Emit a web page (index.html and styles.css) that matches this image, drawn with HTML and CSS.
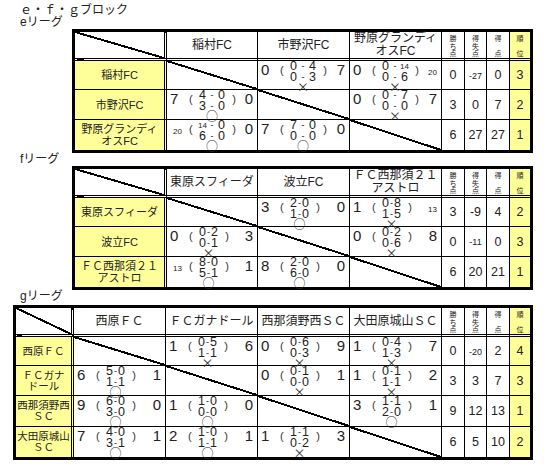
FILE: index.html
```html
<!DOCTYPE html>
<html lang="ja">
<head>
<meta charset="utf-8">
<title>e・f・gブロック</title>
<link rel="stylesheet" href="styles.css">
</head>
<body>
<div class="page">
<p class="title">ｅ・ｆ・ｇブロック</p>
<p class="league">eリーグ</p>
<table class="tbl tbl-e">
<colgroup><col class="w92"><col class="w91"><col class="w92"><col class="w92"><col class="w23"><col class="w22"><col class="w23"><col class="w20"></colgroup>
<tr class="hd">
<th class="dbl dg"></th><th>稲村FC</th><th>市野沢FC</th><th>野原グランディ<br>オスFC</th>
<th class="sh"><div class="v"><span>勝</span><span>ち</span><span>点</span></div></th>
<th class="sh"><div class="v"><span>得</span><span>失</span><span>点</span></div></th>
<th class="sh"><div class="v"><span>得</span><span>点</span></div></th>
<th class="sh rk"><div class="v"><span>順</span><span>位</span></div></th>
</tr>
<tr class="h29">
<td class="dbl nm">稲村FC</td>
<td class="dg"></td>
<td class="s"><div class="sc"><span class="l">0</span><span class="p p1">(</span><span class="stk"><span class="ln"><span class="n">0</span><span class="d">-</span><span class="n">4</span></span><span class="ln"><span class="n">0</span><span class="d">-</span><span class="n">3</span></span><span class="mk">×</span></span><span class="p p2">)</span><span class="r">7</span></div></td>
<td class="s"><div class="sc"><span class="l">0</span><span class="p p1">(</span><span class="stk"><span class="ln"><span class="n">0</span><span class="d">-</span><span class="n"><span class="sm t">14</span></span></span><span class="ln"><span class="n">0</span><span class="d">-</span><span class="n">6</span></span><span class="mk">×</span></span><span class="p p2">)</span><span class="r"><span class="sm">20</span></span></div></td>
<td class="st">0</td><td class="st"><span class="s3">-27</span></td><td class="st">0</td><td class="st rk">3</td>
</tr>
<tr class="h30">
<td class="dbl nm">市野沢FC</td>
<td class="s"><div class="sc"><span class="l">7</span><span class="p p1">(</span><span class="stk"><span class="ln"><span class="n">4</span><span class="d">-</span><span class="n">0</span></span><span class="ln"><span class="n">3</span><span class="d">-</span><span class="n">0</span></span><span class="mk">○</span></span><span class="p p2">)</span><span class="r">0</span></div></td>
<td class="dg"></td>
<td class="s"><div class="sc"><span class="l">0</span><span class="p p1">(</span><span class="stk"><span class="ln"><span class="n">0</span><span class="d">-</span><span class="n">7</span></span><span class="ln"><span class="n">0</span><span class="d">-</span><span class="n">0</span></span><span class="mk">×</span></span><span class="p p2">)</span><span class="r">7</span></div></td>
<td class="st">3</td><td class="st">0</td><td class="st">7</td><td class="st rk">2</td>
</tr>
<tr class="h30">
<td class="dbl nm">野原グランディ<br>オスFC</td>
<td class="s"><div class="sc"><span class="l"><span class="sm">20</span></span><span class="p p1">(</span><span class="stk"><span class="ln"><span class="n"><span class="sm t">14</span></span><span class="d">-</span><span class="n">0</span></span><span class="ln"><span class="n">6</span><span class="d">-</span><span class="n">0</span></span><span class="mk">○</span></span><span class="p p2">)</span><span class="r">0</span></div></td>
<td class="s"><div class="sc"><span class="l">7</span><span class="p p1">(</span><span class="stk"><span class="ln"><span class="n">7</span><span class="d">-</span><span class="n">0</span></span><span class="ln"><span class="n">0</span><span class="d">-</span><span class="n">0</span></span><span class="mk">○</span></span><span class="p p2">)</span><span class="r">0</span></div></td>
<td class="dg"></td>
<td class="st">6</td><td class="st">27</td><td class="st">27</td><td class="st rk">1</td>
</tr>
</table>

<p class="league">fリーグ</p>
<table class="tbl tbl-f">
<colgroup><col class="w92"><col class="w91"><col class="w92"><col class="w92"><col class="w23"><col class="w22"><col class="w23"><col class="w20"></colgroup>
<tr class="hd">
<th class="dbl dg"></th><th>東原スフィーダ</th><th>波立FC</th><th>ＦＣ西那須２１<br>アストロ</th>
<th class="sh"><div class="v"><span>勝</span><span>ち</span><span>点</span></div></th>
<th class="sh"><div class="v"><span>得</span><span>失</span><span>点</span></div></th>
<th class="sh"><div class="v"><span>得</span><span>点</span></div></th>
<th class="sh rk"><div class="v"><span>順</span><span>位</span></div></th>
</tr>
<tr class="h29">
<td class="dbl nm">東原スフィーダ</td>
<td class="dg"></td>
<td class="s"><div class="sc"><span class="l">3</span><span class="p p1">(</span><span class="stk"><span class="ln"><span class="n">2</span><span class="d">-</span><span class="n">0</span></span><span class="ln"><span class="n">1</span><span class="d">-</span><span class="n">0</span></span><span class="mk">○</span></span><span class="p p2">)</span><span class="r">0</span></div></td>
<td class="s"><div class="sc"><span class="l">1</span><span class="p p1">(</span><span class="stk"><span class="ln"><span class="n">0</span><span class="d">-</span><span class="n">8</span></span><span class="ln"><span class="n">1</span><span class="d">-</span><span class="n">5</span></span><span class="mk">×</span></span><span class="p p2">)</span><span class="r"><span class="sm">13</span></span></div></td>
<td class="st">3</td><td class="st">-9</td><td class="st">4</td><td class="st rk">2</td>
</tr>
<tr class="h30">
<td class="dbl nm">波立FC</td>
<td class="s"><div class="sc"><span class="l">0</span><span class="p p1">(</span><span class="stk"><span class="ln"><span class="n">0</span><span class="d">-</span><span class="n">2</span></span><span class="ln"><span class="n">0</span><span class="d">-</span><span class="n">1</span></span><span class="mk">×</span></span><span class="p p2">)</span><span class="r">3</span></div></td>
<td class="dg"></td>
<td class="s"><div class="sc"><span class="l">0</span><span class="p p1">(</span><span class="stk"><span class="ln"><span class="n">0</span><span class="d">-</span><span class="n">2</span></span><span class="ln"><span class="n">0</span><span class="d">-</span><span class="n">6</span></span><span class="mk">×</span></span><span class="p p2">)</span><span class="r">8</span></div></td>
<td class="st">0</td><td class="st"><span class="s3">-11</span></td><td class="st">0</td><td class="st rk">3</td>
</tr>
<tr class="h30">
<td class="dbl nm">ＦＣ西那須２１<br>アストロ</td>
<td class="s"><div class="sc"><span class="l"><span class="sm">13</span></span><span class="p p1">(</span><span class="stk"><span class="ln"><span class="n">8</span><span class="d">-</span><span class="n">0</span></span><span class="ln"><span class="n">5</span><span class="d">-</span><span class="n">1</span></span><span class="mk">○</span></span><span class="p p2">)</span><span class="r">1</span></div></td>
<td class="s"><div class="sc"><span class="l">8</span><span class="p p1">(</span><span class="stk"><span class="ln"><span class="n">2</span><span class="d">-</span><span class="n">0</span></span><span class="ln"><span class="n">6</span><span class="d">-</span><span class="n">0</span></span><span class="mk">○</span></span><span class="p p2">)</span><span class="r">0</span></div></td>
<td class="dg"></td>
<td class="st">6</td><td class="st">20</td><td class="st">21</td><td class="st rk">1</td>
</tr>
</table>

<p class="league league-g">gリーグ</p>
<table class="tbl tbl-g">
<colgroup><col class="w58"><col class="w92"><col class="w92"><col class="w92"><col class="w92"><col class="w23"><col class="w22"><col class="w23"><col class="w20"></colgroup>
<tr class="hd hg">
<th class="dbl dg"></th><th>西原ＦＣ</th><th>ＦＣガナドール</th><th>西那須野西ＳＣ</th><th>大田原城山ＳＣ</th>
<th class="sh"><div class="v"><span>勝</span><span>ち</span><span>点</span></div></th>
<th class="sh"><div class="v"><span>得</span><span>失</span><span>点</span></div></th>
<th class="sh"><div class="v"><span>得</span><span>点</span></div></th>
<th class="sh rk"><div class="v"><span>順</span><span>位</span></div></th>
</tr>
<tr class="h29">
<td class="dbl nm">西原ＦＣ</td>
<td class="dg"></td>
<td class="s"><div class="sc"><span class="l">1</span><span class="p p1">(</span><span class="stk"><span class="ln"><span class="n">0</span><span class="d">-</span><span class="n">5</span></span><span class="ln"><span class="n">1</span><span class="d">-</span><span class="n">1</span></span><span class="mk">×</span></span><span class="p p2">)</span><span class="r">6</span></div></td>
<td class="s"><div class="sc"><span class="l">0</span><span class="p p1">(</span><span class="stk"><span class="ln"><span class="n">0</span><span class="d">-</span><span class="n">6</span></span><span class="ln"><span class="n">0</span><span class="d">-</span><span class="n">3</span></span><span class="mk">×</span></span><span class="p p2">)</span><span class="r">9</span></div></td>
<td class="s"><div class="sc"><span class="l">1</span><span class="p p1">(</span><span class="stk"><span class="ln"><span class="n">0</span><span class="d">-</span><span class="n">4</span></span><span class="ln"><span class="n">1</span><span class="d">-</span><span class="n">3</span></span><span class="mk">×</span></span><span class="p p2">)</span><span class="r">7</span></div></td>
<td class="st">0</td><td class="st"><span class="s3">-20</span></td><td class="st">2</td><td class="st rk">4</td>
</tr>
<tr class="h30">
<td class="dbl nm">ＦＣガナ<br>ドール</td>
<td class="s"><div class="sc"><span class="l">6</span><span class="p p1">(</span><span class="stk"><span class="ln"><span class="n">5</span><span class="d">-</span><span class="n">0</span></span><span class="ln"><span class="n">1</span><span class="d">-</span><span class="n">1</span></span><span class="mk">○</span></span><span class="p p2">)</span><span class="r">1</span></div></td>
<td class="dg"></td>
<td class="s"><div class="sc"><span class="l">0</span><span class="p p1">(</span><span class="stk"><span class="ln"><span class="n">0</span><span class="d">-</span><span class="n">1</span></span><span class="ln"><span class="n">0</span><span class="d">-</span><span class="n">0</span></span><span class="mk">×</span></span><span class="p p2">)</span><span class="r">1</span></div></td>
<td class="s"><div class="sc"><span class="l">1</span><span class="p p1">(</span><span class="stk"><span class="ln"><span class="n">0</span><span class="d">-</span><span class="n">1</span></span><span class="ln"><span class="n">1</span><span class="d">-</span><span class="n">1</span></span><span class="mk">×</span></span><span class="p p2">)</span><span class="r">2</span></div></td>
<td class="st">3</td><td class="st">3</td><td class="st">7</td><td class="st rk">3</td>
</tr>
<tr class="h31">
<td class="dbl nm">西那須野西<br>ＳＣ</td>
<td class="s"><div class="sc"><span class="l">9</span><span class="p p1">(</span><span class="stk"><span class="ln"><span class="n">6</span><span class="d">-</span><span class="n">0</span></span><span class="ln"><span class="n">3</span><span class="d">-</span><span class="n">0</span></span><span class="mk">○</span></span><span class="p p2">)</span><span class="r">0</span></div></td>
<td class="s"><div class="sc"><span class="l">1</span><span class="p p1">(</span><span class="stk"><span class="ln"><span class="n">1</span><span class="d">-</span><span class="n">0</span></span><span class="ln"><span class="n">0</span><span class="d">-</span><span class="n">0</span></span><span class="mk">○</span></span><span class="p p2">)</span><span class="r">0</span></div></td>
<td class="dg"></td>
<td class="s"><div class="sc"><span class="l">3</span><span class="p p1">(</span><span class="stk"><span class="ln"><span class="n">1</span><span class="d">-</span><span class="n">1</span></span><span class="ln"><span class="n">2</span><span class="d">-</span><span class="n">0</span></span><span class="mk">○</span></span><span class="p p2">)</span><span class="r">1</span></div></td>
<td class="st">9</td><td class="st">12</td><td class="st">13</td><td class="st rk">1</td>
</tr>
<tr class="h30">
<td class="dbl nm">大田原城山<br>ＳＣ</td>
<td class="s"><div class="sc"><span class="l">7</span><span class="p p1">(</span><span class="stk"><span class="ln"><span class="n">4</span><span class="d">-</span><span class="n">0</span></span><span class="ln"><span class="n">3</span><span class="d">-</span><span class="n">1</span></span><span class="mk">○</span></span><span class="p p2">)</span><span class="r">1</span></div></td>
<td class="s"><div class="sc"><span class="l">2</span><span class="p p1">(</span><span class="stk"><span class="ln"><span class="n">1</span><span class="d">-</span><span class="n">0</span></span><span class="ln"><span class="n">1</span><span class="d">-</span><span class="n">1</span></span><span class="mk">○</span></span><span class="p p2">)</span><span class="r">1</span></div></td>
<td class="s"><div class="sc"><span class="l">1</span><span class="p p1">(</span><span class="stk"><span class="ln"><span class="n">1</span><span class="d">-</span><span class="n">1</span></span><span class="ln"><span class="n">0</span><span class="d">-</span><span class="n">2</span></span><span class="mk">×</span></span><span class="p p2">)</span><span class="r">3</span></div></td>
<td class="dg"></td>
<td class="st">6</td><td class="st">5</td><td class="st">10</td><td class="st rk">2</td>
</tr>
</table>
</div>
</body>
</html>
```

FILE: styles.css
```css
* { box-sizing: border-box; }
html, body { margin: 0; padding: 0; background: #fff; }
body {
  color: #222;
  font-family: "Liberation Sans", "Noto Sans CJK JP", sans-serif;
  width: 546px;
  height: 469px;
  overflow: hidden;
}
.page { padding-top: 2px; }
.title {
  margin: 0 0 0 20px;
  font-family: "Noto Sans CJK JP", sans-serif;
  font-size: 12px;
  line-height: 14px;
}
.league {
  margin: 0 0 0 20px;
  font-family: "Liberation Sans", "Noto Sans CJK JP", sans-serif;
  font-size: 12px;
  line-height: 13px;
}
.league-g { margin-bottom: 2px; }

.tbl {
  border-collapse: separate;
  border-spacing: 0;
  table-layout: fixed;
  border: 3px solid #000;
}
.tbl-e, .tbl-f { margin-left: 72px; width: 461px; }
.tbl-g { margin-left: 13px; width: 520px; }

.w92 { width: 92px; }
.w91 { width: 91px; }
.w58 { width: 58px; }
.w23 { width: 23px; }
.w22 { width: 22px; }
.w20 { width: 20px; }

.tbl th, .tbl td {
  padding: 0;
  border-right: 1px solid #000;
  border-bottom: 1px solid #000;
  font-weight: normal;
}
.tbl tr > :last-child { border-right: 0; }
.tbl tr:last-child > * { border-bottom: 0; }
.tbl .dbl { border-right: 3px double #000; }
.tbl .hd > * { border-bottom: 3px double #000; }

.hd { height: 28px; }
.hg { height: 29px; }
.h29 { height: 29px; }
.h30 { height: 30px; }
.h31 { height: 31px; }

.tbl th {
  font-size: 12px;
  line-height: 13px;
  text-align: center;
  vertical-align: middle;
  white-space: nowrap;
}

.dg {
  background: linear-gradient(to top right,
    transparent calc(50% - 1px), #000 calc(50% - 1px),
    #000 calc(50% + 1px), transparent calc(50% + 1px));
}

.nm {
  background: #ffff99;
  text-align: center;
  vertical-align: middle;
  font-size: 11px;
  line-height: 12px;
  white-space: nowrap;
}
.tbl-g .nm { font-size: 10.5px; line-height: 11px; }

.rk { background: #ffff99; }

.sh { vertical-align: top; }
.sh .v {
  display: flex;
  flex-direction: column;
  justify-content: space-between;
  align-items: center;
  height: 22px;
  margin-top: 2px;
  font-family: "Noto Sans CJK JP", sans-serif;
  font-size: 7px;
  line-height: 7px;
}

.st {
  text-align: center;
  vertical-align: middle;
  font-size: 12.5px;
  line-height: 14px;
}
.s3 { font-size: 9px; }

.s { vertical-align: top; }
.sc {
  display: grid;
  grid-template-columns: 22px 10px auto 11px 1fr;
  align-items: start;
  height: 27px;
}
.l, .r {
  font-size: 15px;
  line-height: 15px;
  padding-top: 1px;
  white-space: nowrap;
}
.l { padding-left: 3px; }
.l .sm { margin-left: 3px; }
.r { justify-self: end; padding-right: 4px; }
.sm { font-size: 8px; }
.sm.t { vertical-align: 2px; }

.p {
  font-size: 11px;
  line-height: 18px;
  color: #333;
}
.p1 { text-align: left; }
.p2 { text-align: right; }

.stk {
  display: flex;
  flex-direction: column;
  align-items: center;
}
.ln {
  display: flex;
  height: 11px;
  font-size: 12.5px;
  line-height: 11px;
}
.ln .n {
  display: flex;
  justify-content: center;
  width: 7px;
}
.ln .d {
  display: flex;
  justify-content: center;
  width: 12px;
  font-size: 9px;
}
.tbl-f .ln .d, .tbl-g .ln .d { width: 5px; }

.mk {
  font-family: "Noto Sans CJK JP", sans-serif;
  font-size: 12px;
  line-height: 9px;
  height: 9px;
  margin-top: -1px;
  color: #333;
}
```
